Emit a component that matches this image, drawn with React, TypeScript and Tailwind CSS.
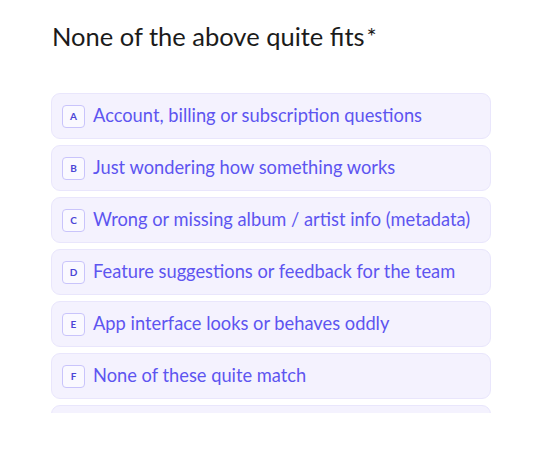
import React from 'react';

const options = [
    { key: 'A', label: 'Account, billing or subscription questions' },
    { key: 'B', label: 'Just wondering how something works' },
    { key: 'C', label: 'Wrong or missing album / artist info (metadata)' },
    { key: 'D', label: 'Feature suggestions or feedback for the team' },
    { key: 'E', label: 'App interface looks or behaves oddly' },
    { key: 'F', label: 'None of these quite match' },
];

const Option: React.FC<{ letter: string; label: string }> = ({ letter, label }) => (
    <div className="flex h-[46px] w-[440px] shrink-0 items-center gap-[8px] rounded-[9px] border border-[#e9e6fc] bg-[#f4f2fe] pl-[10px]">
        <span className="flex h-[23px] w-[23px] items-center justify-center rounded-[4px] border border-[#c9c4fb] bg-[#faf9ff] text-[10px] font-bold text-[#4b45d6]">
            {letter}
        </span>
        <span className="text-[18.3px] text-[#5d55f0]">{label}</span>
    </div>
);

export default function App() {
    return (
        <div className="h-[462px] w-[542px] bg-white pl-[51px] pt-[20px]" style={{ fontFamily: 'Lato, "Noto Sans", sans-serif' }}>
            <h1 className="pl-[1px] text-[25.5px] leading-[32px] text-[#1b1b1b]">
                None of the above quite fits<span className="ml-[2px] align-top text-[24px]">*</span>
            </h1>
            <div className="mt-[41px] flex h-[320px] flex-col gap-[6px] overflow-hidden">
                {options.map((o) => (
                    <Option key={o.key} letter={o.key} label={o.label} />
                ))}
                {/* next option, scrolled out of view */}
                <div className="h-[46px] w-[440px] shrink-0 rounded-[9px] border border-[#e9e6fc] bg-[#f4f2fe]" />
            </div>
        </div>
    );
}
